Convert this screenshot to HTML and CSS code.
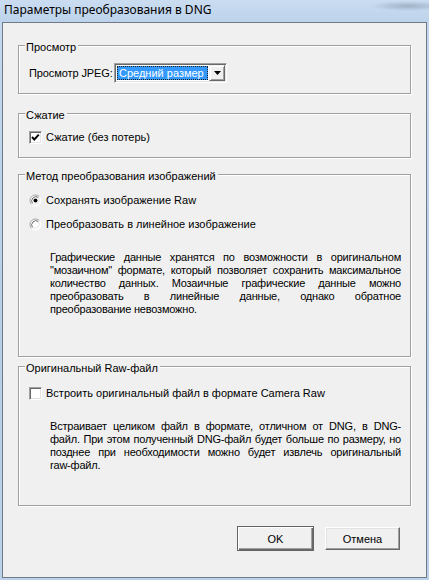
FILE: index.html
```html
<!DOCTYPE html>
<html>
<head>
  <title>Параметры преобразования в DNG</title>
  <link rel="stylesheet" href="styles.css">
</head>
<body>

  <div class="window">
    <div class="titlebar">Параметры преобразования в DNG</div>

    <div class="client">

      <div class="group group-preview">
        <div class="group-title">Просмотр</div>
        <div class="jpeg-row">
          <span class="label">Просмотр JPEG:</span>
          <div class="combo">
            <span class="combo-value">Средний размер</span>
            <span class="combo-btn">
              <svg width="7" height="4" viewBox="0 0 7 4"><path d="M0 0 H7 L3.5 4 Z" fill="#000"/></svg>
            </span>
          </div>
        </div>
      </div>

      <div class="group group-compress">
        <div class="group-title">Сжатие</div>
        <div class="option first">
          <span class="check">
            <svg width="11" height="11" viewBox="0 0 11 11"><polyline points="2,5 4.3,7.5 8.8,2.6" fill="none" stroke="#000" stroke-width="1.9"/></svg>
          </span>
          Сжатие (без потерь)
        </div>
      </div>

      <div class="group group-method">
        <div class="group-title">Метод преобразования изображений</div>
        <div class="option first">
          <svg class="radio" width="13" height="13" viewBox="0 0 13 13">
            <circle cx="6.5" cy="6.5" r="5.5" fill="#fff"/>
            <path d="M2.6 10.4 A5.5 5.5 0 0 1 10.4 2.6" fill="none" stroke="#a0a0a0"/>
            <path d="M10.4 2.6 A5.5 5.5 0 0 1 2.6 10.4" fill="none" stroke="#fff"/>
            <path d="M3.5 9.5 A4.3 4.3 0 0 1 9.5 3.5" fill="none" stroke="#696969"/>
            <path d="M9.5 3.5 A4.3 4.3 0 0 1 3.5 9.5" fill="none" stroke="#e3e3e3"/>
            <circle cx="6.5" cy="6.5" r="2" fill="#000"/>
          </svg>
          Сохранять изображение Raw
        </div>
        <div class="option second">
          <svg class="radio" width="13" height="13" viewBox="0 0 13 13">
            <circle cx="6.5" cy="6.5" r="5.5" fill="#fff"/>
            <path d="M2.6 10.4 A5.5 5.5 0 0 1 10.4 2.6" fill="none" stroke="#a0a0a0"/>
            <path d="M10.4 2.6 A5.5 5.5 0 0 1 2.6 10.4" fill="none" stroke="#fff"/>
            <path d="M3.5 9.5 A4.3 4.3 0 0 1 9.5 3.5" fill="none" stroke="#696969"/>
            <path d="M9.5 3.5 A4.3 4.3 0 0 1 3.5 9.5" fill="none" stroke="#e3e3e3"/>
          </svg>
          Преобразовать в линейное изображение
        </div>
        <p class="note">
          <span class="line">Графические данные хранятся по возможности в оригинальном</span>
          <span class="line">"мозаичном" формате, который позволяет сохранить максимальное</span>
          <span class="line">количество данных. Мозаичные графические данные можно</span>
          <span class="line">преобразовать в линейные данные, однако обратное</span>
          <span class="line last">преобразование невозможно.</span>
        </p>
      </div>

      <div class="group group-raw">
        <div class="group-title">Оригинальный Raw-файл</div>
        <div class="option first">
          <span class="check"></span>
          Встроить оригинальный файл в формате Camera Raw
        </div>
        <p class="note">
          <span class="line">Встраивает целиком файл в формате, отличном от DNG, в DNG-</span>
          <span class="line">файл. При этом полученный DNG-файл будет больше по размеру, но</span>
          <span class="line">позднее при необходимости можно будет извлечь оригинальный</span>
          <span class="line last">raw-файл.</span>
        </p>
      </div>

      <div class="buttons">
        <button class="btn btn-default">OK</button>
        <button class="btn">Отмена</button>
      </div>

    </div>
  </div>

</body>
</html>
```

FILE: styles.css
```css
body {
  margin: 0;
  font-family: Tahoma, "Liberation Sans", Arial, sans-serif;
  font-size: 11px;
  color: #000;
}

.window {
  width: 429px;
  height: 580px;
  display: flex;
  flex-direction: column;
  background: linear-gradient(to bottom, #c4d9ef, #b6cde6 60%, #bcd2ea);
}

.titlebar {
  height: 22px;
  line-height: 20px;
  padding-left: 4px;
  font-family: "Segoe UI", "Noto Sans", sans-serif;
  font-size: 12px;
  color: #000;
  background:
    radial-gradient(ellipse 38px 5px at 408px 6px, rgba(110, 130, 150, 0.45), rgba(110, 130, 150, 0)),
    linear-gradient(to bottom, #cadcf0, #bcd3eb);
}

.client {
  flex: 1;
  margin: 0 2px 2px 2px;
  border: 1px solid #6f7a86;
  background: #f0f0f0;
}

/* etched group boxes */
.group {
  box-sizing: border-box;
  margin: 0 15px;
  border: 1px solid #a0a0a0;
  box-shadow: 1px 1px 0 #fff, inset 1px 1px 0 #fff;
}

.group-title {
  display: table;
  margin: -5px 0 0 6px;
  padding: 0 2px 0 1px;
  line-height: 13px;
  background: #f0f0f0;
}

.group-preview { margin-top: 22px; height: 49px; }
.group-compress { margin-top: 19px; height: 45px; }
.group-method { margin-top: 16px; height: 183px; }
.group-raw { margin-top: 9px; height: 140px; }

.jpeg-row {
  display: flex;
  align-items: center;
  margin-top: 9px;
  padding-left: 10px;
  height: 20px;
}

.label {
  flex: none;
  width: 85px;
  white-space: nowrap;
  letter-spacing: -0.1px;
}

.combo {
  box-sizing: border-box;
  flex: none;
  width: 113px;
  height: 20px;
  padding: 1px;
  display: flex;
  background: #fff;
  border: 1px solid;
  border-color: #a0a0a0 #fff #fff #a0a0a0;
  box-shadow: inset 1px 1px 0 #696969, inset -1px -1px 0 #e3e3e3;
}

.combo-value {
  flex: 1;
  margin: 1px;
  padding-left: 1px;
  line-height: 12px;
  white-space: nowrap;
  color: #fff;
  background: #3399ff;
  border: 1px dotted #222;
}

.combo-btn {
  box-sizing: border-box;
  width: 16px;
  display: flex;
  align-items: center;
  justify-content: center;
  background: #f0f0f0;
  border: 1px solid;
  border-color: #f0f0f0 #696969 #696969 #f0f0f0;
  box-shadow: inset 1px 1px 0 #fff, inset -1px -1px 0 #a0a0a0;
}

.option {
  display: flex;
  align-items: center;
  height: 13px;
  line-height: 13px;
  padding-left: 10px;
  white-space: nowrap;
}

.group-compress .option.first { margin-top: 9px; }
.group-method .option.first { margin-top: 11px; }
.group-method .option.second { margin-top: 11px; }
.group-raw .option.first { margin-top: 12px; }

.check {
  box-sizing: border-box;
  width: 13px;
  height: 13px;
  margin-right: 4px;
  display: flex;
  background: #fff;
  border: 1px solid;
  border-color: #a0a0a0 #fff #fff #a0a0a0;
  box-shadow: inset 1px 1px 0 #696969, inset -1px -1px 0 #e3e3e3;
}

.radio {
  margin-right: 4px;
  flex: none;
}

.note {
  margin: 20px 9px 0 31px;
  line-height: 13px;
  letter-spacing: -0.2px;
}

.line {
  display: block;
  white-space: nowrap;
  text-align: justify;
  text-align-last: justify;
}

.line.last {
  text-align-last: left;
}

.buttons {
  display: flex;
  justify-content: flex-end;
  align-items: center;
  gap: 11px;
  height: 25px;
  margin: 20px 26px 0 0;
}

.btn {
  box-sizing: border-box;
  width: 75px;
  height: 23px;
  padding: 0;
  font-family: Tahoma, "Liberation Sans", Arial, sans-serif;
  font-size: 11px;
  color: #000;
  background: #f0f0f0;
  border: 1px solid;
  border-color: #fff #696969 #696969 #fff;
  box-shadow: inset -1px -1px 0 #a0a0a0, inset 1px 1px 0 #e3e3e3;
}

.btn-default {
  width: 77px;
  height: 25px;
  border: 1px solid #646464;
  box-shadow: inset 1px 1px 0 #fff, inset -1px -1px 0 #696969, inset -2px -2px 0 #a0a0a0;
}
```
